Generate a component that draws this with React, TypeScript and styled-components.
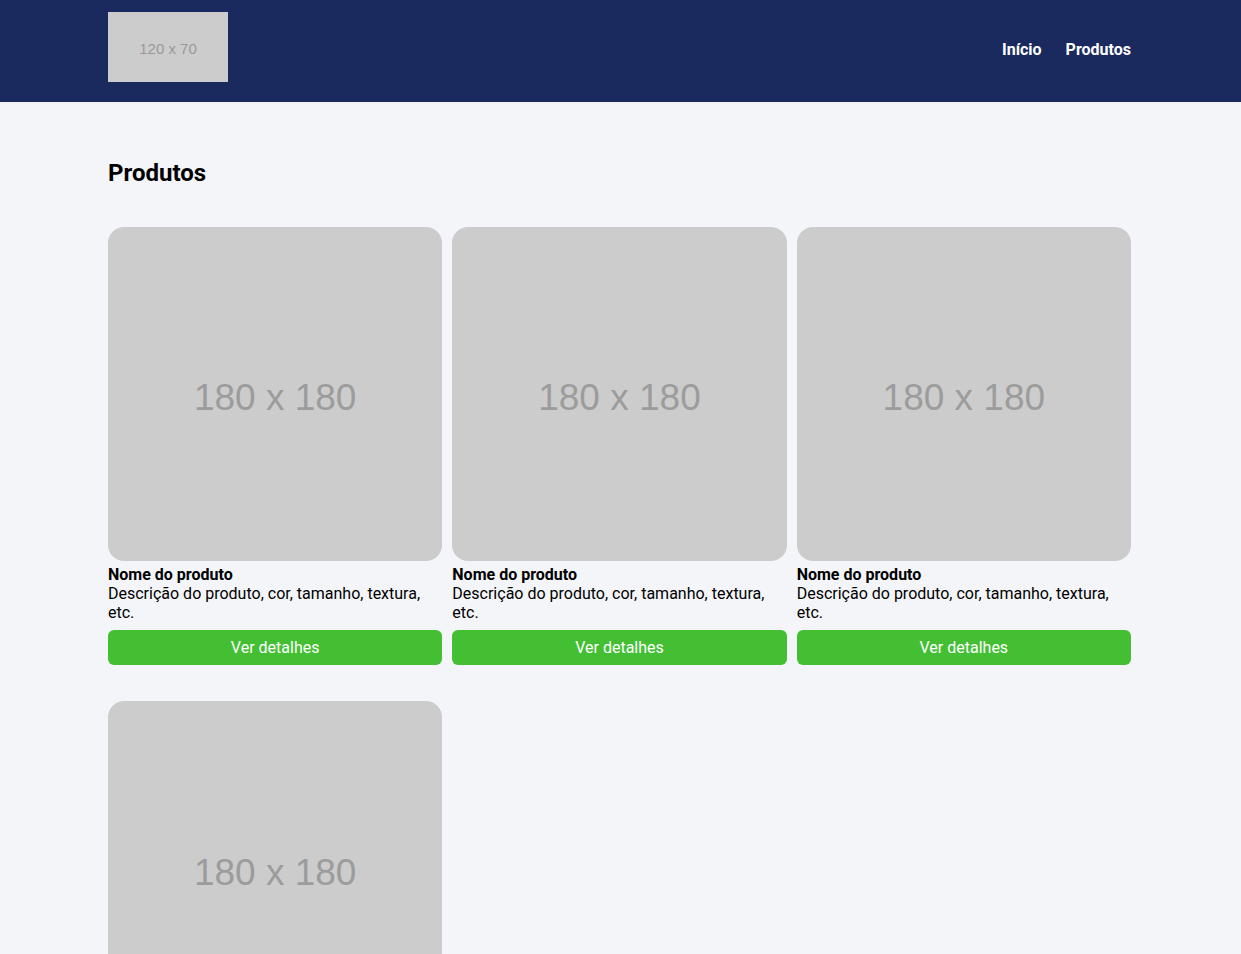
import styled, { createGlobalStyle } from 'styled-components';

const GlobalStyle = createGlobalStyle`
    html, body {
        margin: 0;
        padding: 0;
        background: #f4f5f9;
        font-family: Roboto, "Liberation Sans", sans-serif;
        color: #000;
    }
    * { box-sizing: border-box; }
`;

const products = [1, 2, 3, 4];

const App = () => {
    return (
        <>
            <GlobalStyle />
            <Header>
                <Wrapper>
                    <HeaderRow>
                        <Logo>120 x 70</Logo>
                        <Nav>
                            <NavLink href="#">Início</NavLink>
                            <NavLink href="#">Produtos</NavLink>
                        </Nav>
                    </HeaderRow>
                </Wrapper>
            </Header>
            <Main>
                <Wrapper>
                    <Title>Produtos</Title>
                    <Grid>
                        {products.map(id => (
                            <Card key={id}>
                                <Thumb>180 x 180</Thumb>
                                <Name>Nome do produto</Name>
                                <Description>Descrição do produto, cor, tamanho, textura, etc.</Description>
                                <Button>Ver detalhes</Button>
                            </Card>
                        ))}
                    </Grid>
                </Wrapper>
            </Main>
        </>
    )
}

export default App;

const Header = styled.header`
    background: #1a2a5f;
    height: 102px;
`;
const Wrapper = styled.div`
    margin: 0 110px 0 108px;
`;
const HeaderRow = styled.div`
    display: flex;
    align-items: flex-start;
    justify-content: space-between;
    padding-top: 12px;
`;
const Logo = styled.div`
    width: 120px;
    height: 70px;
    background: #cccccc;
    color: #999999;
    font-family: "Liberation Sans", Arial, sans-serif;
    font-size: 15px;
    display: flex;
    align-items: center;
    justify-content: center;
    padding-top: 2px;
`;
const Nav = styled.nav`
    display: flex;
    gap: 24px;
    margin-top: 28px;
    line-height: 19px;
`;
const NavLink = styled.a`
    color: #fff;
    text-decoration: none;
    font-weight: 700;
    font-size: 16px;
`;
const Main = styled.main`
    padding-top: 57px;
`;
const Title = styled.h2`
    margin: 0 0 40px;
    font-size: 24px;
    line-height: 28px;
    font-weight: 700;
`;
const Grid = styled.div`
    display: grid;
    grid-template-columns: repeat(3, 1fr);
    column-gap: 10px;
    row-gap: 36px;
`;
const Card = styled.div`
    display: flex;
    flex-direction: column;
`;
const Thumb = styled.div`
    aspect-ratio: 1 / 1;
    background: #cccccc;
    border-radius: 16px;
    color: #9c9c9c;
    font-family: "Liberation Sans", Arial, sans-serif;
    font-size: 37px;
    display: flex;
    align-items: center;
    justify-content: center;
    padding-top: 8px;
`;
const Name = styled.h3`
    margin: 4px 0 0;
    font-size: 16px;
    line-height: 19px;
    font-weight: 700;
`;
const Description = styled.p`
    margin: 0;
    font-size: 16px;
    line-height: 19px;
`;
const Button = styled.button`
    margin-top: 8px;
    height: 35px;
    border: none;
    border-radius: 6px;
    background: #44bf34;
    color: #fff;
    font-family: Roboto, "Liberation Sans", sans-serif;
    font-size: 16px;
    cursor: pointer;
`;
